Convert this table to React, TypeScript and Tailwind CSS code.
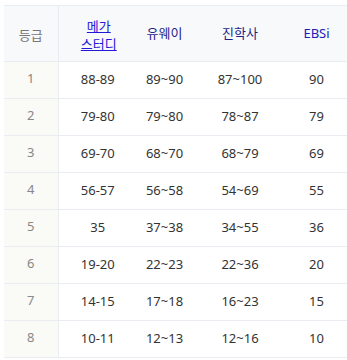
const rows = [
  ['1', '88-89', '89~90', '87~100', '90'],
  ['2', '79-80', '79~80', '78~87', '79'],
  ['3', '69-70', '68~70', '68~79', '69'],
  ['4', '56-57', '56~58', '54~69', '55'],
  ['5', '35', '37~38', '34~55', '36'],
  ['6', '19-20', '22~23', '22~36', '20'],
  ['7', '14-15', '17~18', '16~23', '15'],
  ['8', '10-11', '12~13', '12~16', '10'],
];

export default function App() {
  return (
    <div className="h-[360px] w-[347px] bg-white pl-[4px] pt-[5px] font-['Noto_Sans','Noto_Sans_CJK_KR',sans-serif] text-[13px]">
      <table className="w-[343px] table-fixed border-collapse">
        <colgroup>
          <col className="w-[54px]" />
          <col className="w-[81px]" />
          <col className="w-[51px]" />
          <col className="w-[100px]" />
          <col className="w-[57px]" />
        </colgroup>
        <thead>
          <tr className="h-[56px] border-y border-[#e9ecf0] bg-[#f8f9fb]">
            <th className="border-r border-[#e9ecf0] pt-[4px] text-center font-normal text-[#777]">등급</th>
            <th className="pt-[3px] text-center font-normal leading-[18px]">
              <a className="text-[#2418d8] underline">
                메가
                <br />
                스터디
              </a>
            </th>
            <th className="text-center font-normal text-[#1e1e8a]">유웨이</th>
            <th className="text-center font-normal text-[#1e1e8a]">진학사</th>
            <th className="pr-[4px] text-center font-normal text-[#2020b8]">EBSi</th>
          </tr>
        </thead>
        <tbody>
          {rows.map((r) => (
            <tr key={r[0]} className="h-[37px] border-b border-[#e9ecf0] text-[#333]">
              <td className="border-r border-[#e9ecf0] bg-[#fafaf6] pb-[3px] text-center text-[#888]">{r[0]}</td>
              <td className="pr-[2px] text-center">{r[1]}</td>
              <td className="text-center">{r[2]}</td>
              <td className="text-center">{r[3]}</td>
              <td className="pr-[4px] text-center">{r[4]}</td>
            </tr>
          ))}
        </tbody>
      </table>
    </div>
  );
}
